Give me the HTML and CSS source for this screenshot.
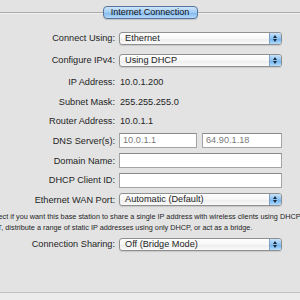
FILE: index.html
```html
<!DOCTYPE html>
<html lang="en">
<head>
    <meta charset="UTF-8">
    <title>Internet Connection</title>
    <link rel="stylesheet" href="styles.css">
</head>
<body>
    <div class="pane">
        <div class="tabbar">
            <span class="rule"></span>
            <span class="tab">Internet Connection</span>
            <span class="rule"></span>
        </div>

        <div class="form">
            <div class="row h22">
                <span class="label">Connect Using:</span>
                <div class="popup"><span>Ethernet</span><span class="arrows"></span></div>
            </div>
            <div class="row h22">
                <span class="label">Configure IPv4:</span>
                <div class="popup"><span>Using DHCP</span><span class="arrows"></span></div>
            </div>
            <div class="row h22">
                <span class="label">IP Address:</span>
                <span class="value">10.0.1.200</span>
            </div>
            <div class="row h18">
                <span class="label">Subnet Mask:</span>
                <span class="value">255.255.255.0</span>
            </div>
            <div class="row h19">
                <span class="label">Router Address:</span>
                <span class="value">10.0.1.1</span>
            </div>
            <div class="row h21">
                <span class="label">DNS Server(s):</span>
                <div class="pair">
                    <span class="field short">10.0.1.1</span>
                    <span class="field short wide">64.90.1.18</span>
                </div>
            </div>
            <div class="row h19">
                <span class="label">Domain Name:</span>
                <span class="field"></span>
            </div>
            <div class="row h20">
                <span class="label">DHCP Client ID:</span>
                <span class="field"></span>
            </div>
            <div class="row h19">
                <span class="label">Ethernet WAN Port:</span>
                <div class="popup"><span>Automatic (Default)</span><span class="arrows"></span></div>
            </div>
        </div>

        <p class="note">Select if you want this base station to share a single IP address with wireless clients using DHCP and<br>NAT, distribute a range of static IP addresses using only DHCP, or act as a bridge.</p>

        <div class="row h22">
            <span class="label">Connection Sharing:</span>
            <div class="popup"><span>Off (Bridge Mode)</span><span class="arrows"></span></div>
        </div>
    </div>
    <div class="footer"></div>
</body>
</html>
```

FILE: styles.css
```css
html, body {
    margin: 0;
    height: 100%;
}
body {
    font-family: "Liberation Sans", Arial, sans-serif;
    font-size: 9.2px;
    color: #1e1e1e;
    background: #e3e3e3;
    display: flex;
    flex-direction: column;
    overflow: hidden;
}
.pane {
    flex: 1;
}
.tabbar {
    display: flex;
    align-items: center;
    height: 27px;
    padding-bottom: 2px;
    box-sizing: border-box;
}
.rule {
    flex: 1;
    height: 1px;
    background: #a9a9a9;
    border-bottom: 1px solid #f1f1f1;
}
.tab {
    width: 95px;
    height: 13px;
    box-sizing: border-box;
    border: 1px solid #56749e;
    border-radius: 4px;
    background: linear-gradient(#cfe6fb, #9ecaf3 50%, #7db6ee 51%, #b4d9fa);
    text-align: center;
    line-height: 11px;
    font-size: 9px;
    color: #111;
    box-shadow: 0 1px 1px rgba(0,0,0,0.15);
}
.row {
    display: grid;
    grid-template-columns: 115px 163px;
    column-gap: 4px;
    align-items: center;
}
.h18 { height: 18px; }
.h19 { height: 19px; }
.h20 { height: 20px; }
.h21 { height: 21px; }
.h22 { height: 22px; }
.label {
    text-align: right;
}
.value {
    padding-left: 1px;
}
.popup {
    display: flex;
    align-items: center;
    height: 13px;
    box-sizing: border-box;
    border: 1px solid #8f8f8f;
    border-radius: 3px;
    background: linear-gradient(#ffffff, #f7f7f7 50%, #ececec 51%, #fafafa);
    box-shadow: 0 1px 1px rgba(0,0,0,0.12);
    overflow: hidden;
}
.popup span:first-child {
    flex: 1;
    padding-left: 5px;
    line-height: 11px;
}
.arrows {
    width: 11px;
    height: 100%;
    background: linear-gradient(#c7e1fa, #8cc2f2 50%, #6aaeee 51%, #b4dcfb);
    border-left: 1px solid #7e9fc8;
    position: relative;
}
.arrows::before,
.arrows::after {
    content: '';
    position: absolute;
    left: 3px;
    border-left: 2.5px solid transparent;
    border-right: 2.5px solid transparent;
}
.arrows::before {
    top: 2px;
    border-bottom: 3px solid #1b2a3d;
}
.arrows::after {
    bottom: 2px;
    border-top: 3px solid #1b2a3d;
}
.field {
    display: block;
    height: 15px;
    box-sizing: border-box;
    background: #fff;
    border: 1px solid #a4a4a4;
    border-top-color: #8a8a8a;
    padding-left: 3px;
    line-height: 13px;
    color: #7a7a7a;
}
.pair {
    display: flex;
    gap: 5px;
}
.field.short {
    width: 78px;
}
.field.wide {
    width: 80px;
}
.note {
    margin: 2px 0 0 -12px;
    font-size: 7.3px;
    line-height: 11px;
    white-space: nowrap;
}
.footer {
    height: 7px;
    background: #ececec;
    border-top: 1px solid #c2c2c2;
}
```
